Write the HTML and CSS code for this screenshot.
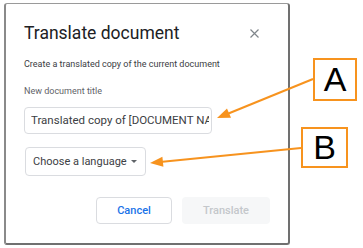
FILE: index.html
```html
<!DOCTYPE html>
<html>
<head>
<title>Translate document</title>
<link rel="stylesheet" href="styles.css">
</head>
<body>
<div class="dialog">
  <div class="dialog-header">
    <div class="dialog-title">Translate document</div>
    <svg class="close-icon" width="9" height="9" viewBox="0 0 9 9">
      <path d="M0.5 0.5 L8.5 8.5 M8.5 0.5 L0.5 8.5" stroke="#80868b" stroke-width="1.2" fill="none"/>
    </svg>
  </div>
  <div class="dialog-desc">Create a translated copy of the current document</div>
  <div class="field-label">New document title</div>
  <div class="text-input"><span class="input-value">Translated copy of [DOCUMENT NAME]</span></div>
  <div class="select-box">
    <span>Choose a language</span>
    <span class="caret"></span>
  </div>
  <div class="dialog-footer">
    <button class="btn btn-cancel">Cancel</button>
    <button class="btn btn-translate">Translate</button>
  </div>
</div>

<svg class="arrows" width="363" height="248" viewBox="0 0 363 248">
  <line x1="313" y1="79" x2="226" y2="114.5" stroke="#f7931e" stroke-width="2"/>
  <polygon points="217,118 231,117.7 227,108.5" fill="#f7931e"/>
  <line x1="301" y1="148" x2="160" y2="162" stroke="#f7931e" stroke-width="2"/>
  <polygon points="150,163 163.4,166.7 162.4,156.7" fill="#f7931e"/>
</svg>

<div class="callout callout-a">A</div>
<div class="callout callout-b">B</div>
</body>
</html>
```

FILE: styles.css
```css
body {
margin: 0;
padding: 3px 0 0 4px;
background-color: #fff;
font-family: Roboto, "Liberation Sans", sans-serif;
position: relative;
width: 363px;
height: 248px;
box-sizing: border-box;
overflow: hidden;
}

.dialog {
width: 286px;
height: 242px;
box-sizing: border-box;
border-top: 1px solid #9a9a9a;
border-left: 2px solid #8a8a8a;
border-right: 2px solid #707070;
border-bottom: 2px solid #707070;
border-radius: 3px;
padding: 19px 18px 0 18px;
display: flex;
flex-direction: column;
align-items: flex-start;
}

.dialog-header {
align-self: stretch;
display: flex;
justify-content: space-between;
align-items: center;
padding-right: 11px;
}

.dialog-title {
font-size: 17.5px;
line-height: 20px;
color: #202124;
}

.close-icon {
display: block;
margin-top: 1px;
}

.dialog-desc {
margin-top: 15px;
font-size: 9px;
line-height: 12px;
color: #3c4043;
}

.field-label {
margin-top: 15px;
font-size: 9px;
line-height: 12px;
color: #5f6368;
}

.text-input {
margin-top: 10px;
width: 188px;
height: 27px;
box-sizing: border-box;
border: 1px solid #dadce0;
border-radius: 4px;
padding: 0 2px 0 6px;
font-size: 11.5px;
line-height: 25px;
color: #3c4043;
}

.input-value {
display: block;
white-space: nowrap;
overflow: hidden;
}

.select-box {
margin-top: 13px;
margin-left: 1px;
width: 121px;
height: 29px;
box-sizing: border-box;
border: 1px solid #dadce0;
border-radius: 4px;
padding: 0 8px 0 7px;
display: flex;
align-items: center;
justify-content: space-between;
font-size: 11px;
color: #3c4043;
}

.caret {
width: 0;
height: 0;
border-left: 3px solid transparent;
border-right: 3px solid transparent;
border-top: 3px solid #5f6368;
}

.dialog-footer {
margin-top: 21px;
align-self: stretch;
display: flex;
justify-content: flex-end;
gap: 10px;
}

.btn {
height: 27px;
border-radius: 4px;
font-family: Roboto, "Liberation Sans", sans-serif;
font-size: 11px;
font-weight: 500;
padding: 0;
}

.btn-cancel {
width: 76px;
background-color: #fff;
border: 1px solid #dadce0;
color: #1a73e8;
}

.btn-translate {
width: 88px;
background-color: #f6f7f8;
border: none;
color: #c4c7cb;
}

.arrows {
position: absolute;
left: 0;
top: 0;
pointer-events: none;
}

.callout {
position: absolute;
box-sizing: border-box;
border: 2px solid #f7931e;
background-color: #fff;
display: flex;
align-items: center;
justify-content: center;
font-family: "Liberation Sans", Arial, sans-serif;
font-size: 34px;
color: #000;
}

.callout-a {
left: 313px;
top: 58px;
width: 44px;
height: 43px;
}

.callout-b {
left: 301px;
top: 127px;
width: 47px;
height: 41px;
}
```
